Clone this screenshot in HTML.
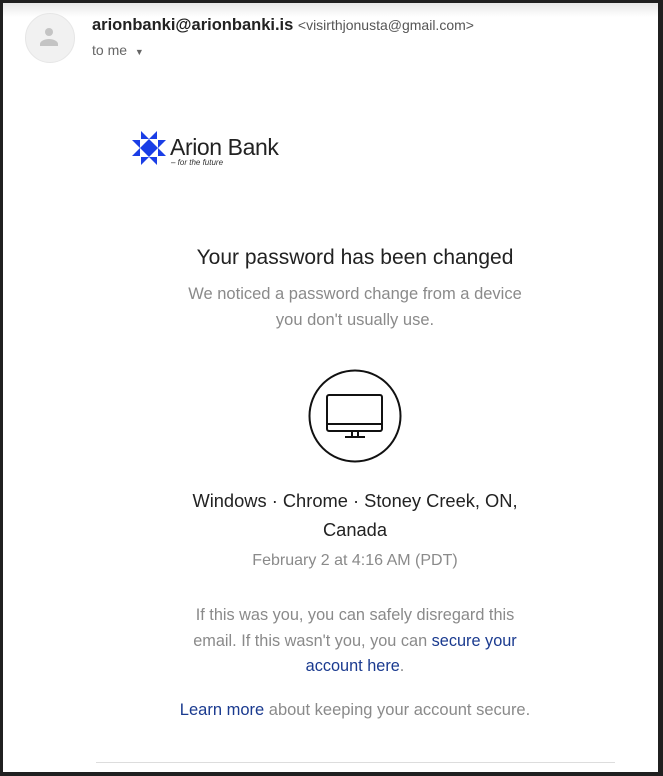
<!DOCTYPE html>
<html><head><meta charset="utf-8"><style>
html,body{margin:0;padding:0;}
body{width:663px;height:776px;position:relative;overflow:hidden;background:#202020;font-family:"Liberation Sans",Arial,sans-serif;}
#card{position:absolute;left:3px;top:3px;width:655px;height:769px;background:#fff;}
#shade{position:absolute;left:3px;top:3px;width:655px;height:14px;background:linear-gradient(#e8e8e8,#fff);}
.t{position:absolute;white-space:nowrap;}
.c{position:absolute;left:60px;width:590px;text-align:center;}
.g{color:#8a8a8a;}
a{color:#1a3a8f;text-decoration:none;}
</style></head><body>
<div id="card"></div><div id="shade"></div>
<div style="position:absolute;left:25px;top:13px;width:48px;height:48px;border-radius:50%;background:#f1f1f1;border:1px solid #e6e6e6;"></div>
<svg style="position:absolute;left:37px;top:25px" width="24" height="24" viewBox="0 0 24 24"><circle cx="12" cy="7" r="4" fill="#c4c4c4"/><path d="M3 21v-2c0-3 5-5 9-5s9 2 9 5v2z" fill="#c4c4c4"/></svg>
<div class="t" style="left:92px;top:16px;font-size:16.5px;font-weight:bold;color:#222;">arionbanki@arionbanki.is <span style="font-weight:normal;font-size:14px;color:#555;">&lt;visirthjonusta@gmail.com&gt;</span></div>
<div class="t" style="left:92px;top:42px;font-size:14px;color:#666;">to me <span style="font-size:9px;color:#666;margin-left:4px;">&#9660;</span></div>
<svg style="position:absolute;left:132px;top:131px" width="34" height="34" viewBox="0 0 34 34" fill="#1a3ee6">
<polygon points="17,8 26,17 17,26 8,17"/>
<polygon points="9,0 17,8 9,8"/><polygon points="25,0 25,8 17,8"/>
<polygon points="34,9 26,17 26,9"/><polygon points="34,25 26,25 26,17"/>
<polygon points="25,34 17,26 25,26"/><polygon points="9,34 9,26 17,26"/>
<polygon points="0,25 8,17 8,25"/><polygon points="0,9 8,9 8,17"/>
</svg>
<div class="t" style="left:170px;top:134px;font-size:23px;color:#222;letter-spacing:-0.4px;">Arion Bank</div>
<div class="t" style="left:171px;top:158px;font-size:8px;font-style:italic;color:#333;">– for the future</div>
<div class="c" style="top:246px;font-size:21px;color:#222;">Your password has been changed</div>
<div class="c g" style="top:281px;font-size:16.5px;line-height:26px;">We noticed a password change from a device<br>you don't usually use.</div>
<svg style="position:absolute;left:308px;top:369px" width="94" height="94" viewBox="0 0 94 94" fill="none" stroke="#111" stroke-width="2">
<circle cx="47" cy="47" r="45.5"/>
<rect x="19" y="26" width="55" height="36" rx="2"/>
<line x1="19" y1="55" x2="74" y2="55"/>
<path d="M44 62v5M50 62v5"/><line x1="37" y1="68" x2="57" y2="68"/>
</svg>
<div class="c" style="top:486px;font-size:18.3px;line-height:29px;color:#222;">Windows · Chrome · Stoney Creek, ON,<br>Canada</div>
<div class="c g" style="top:552px;font-size:16px;">February 2 at 4:16 AM (PDT)</div>
<div class="c g" style="top:603px;font-size:16.3px;line-height:25.5px;">If this was you, you can safely disregard this<br>email. If this wasn't you, you can <a>secure your</a><br><a>account here</a>.</div>
<div class="c g" style="top:701px;font-size:16.5px;"><a>Learn more</a> about keeping your account secure.</div>
<div style="position:absolute;left:96px;top:762px;width:519px;height:1px;background:#ddd;"></div>
</body></html>
